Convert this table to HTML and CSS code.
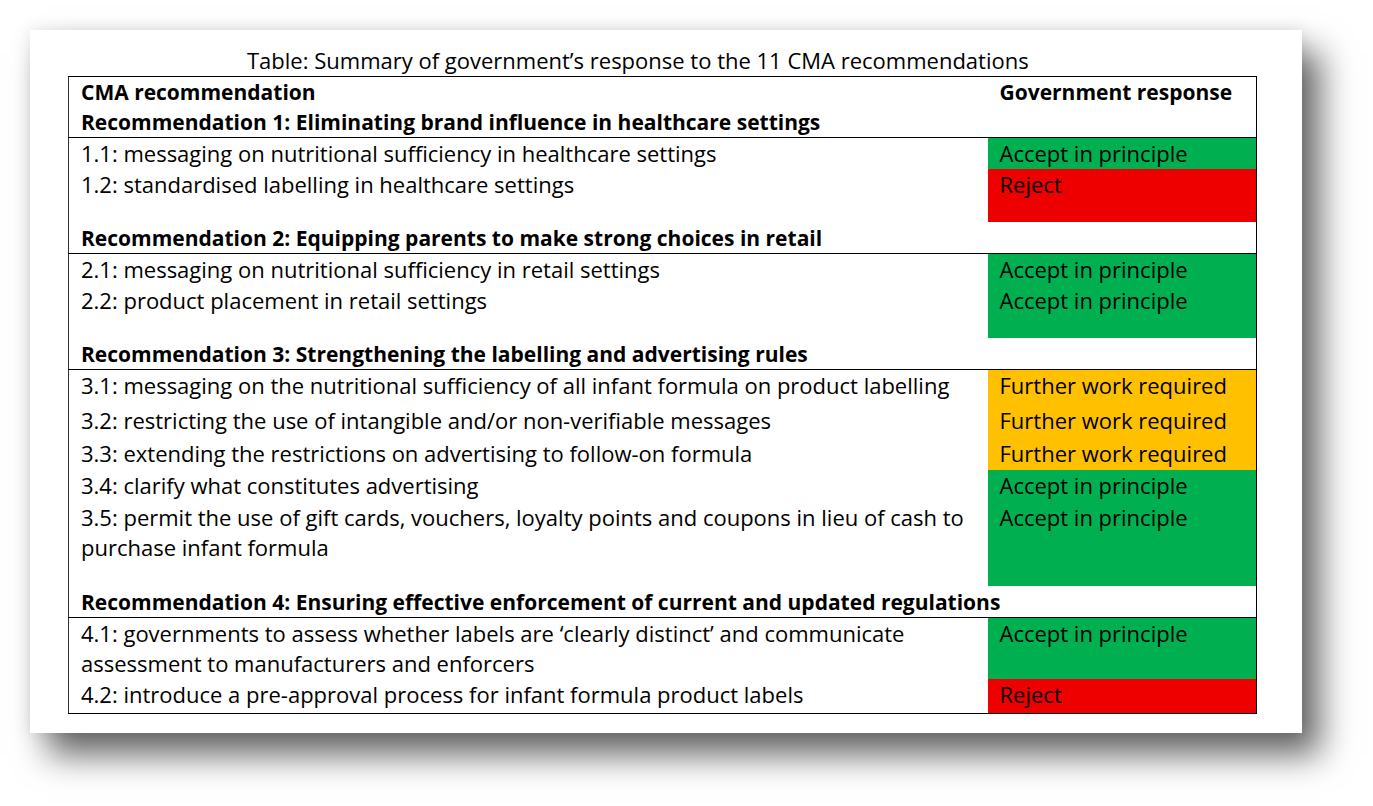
FILE: index.html
```html
<!DOCTYPE html>
<html lang="en">
<head>
<meta charset="utf-8">
<title>Summary of government's response</title>
<link rel="stylesheet" href="styles.css">
</head>
<body>
<div class="page">
  <div class="card">
    <div class="title">Table: Summary of government’s response to the 11 CMA recommendations</div>
    <table class="summary">
      <colgroup><col class="col-rec"><col class="col-resp"></colgroup>
      <thead>
        <tr class="head"><th>CMA recommendation</th><th>Government response</th></tr>
      </thead>
      <tbody>
        <tr class="group first"><th colspan="2">Recommendation 1: Eliminating brand influence in healthcare settings</th></tr>
        <tr><td>1.1: messaging on nutritional sufficiency in healthcare settings</td><td class="green">Accept in principle</td></tr>
        <tr class="last"><td>1.2: standardised labelling in healthcare settings</td><td class="red">Reject</td></tr>

        <tr class="group"><th colspan="2">Recommendation 2: Equipping parents to make strong choices in retail</th></tr>
        <tr><td>2.1: messaging on nutritional sufficiency in retail settings</td><td class="green">Accept in principle</td></tr>
        <tr class="last"><td>2.2: product placement in retail settings</td><td class="green">Accept in principle</td></tr>

        <tr class="group"><th colspan="2">Recommendation 3: Strengthening the labelling and advertising rules</th></tr>
        <tr class="pb5"><td>3.1: messaging on the nutritional sufficiency of all infant formula on product labelling</td><td class="amber">Further work required</td></tr>
        <tr class="pb3"><td>3.2: restricting the use of intangible and/or non-verifiable messages</td><td class="amber">Further work required</td></tr>
        <tr class="pb2"><td>3.3: extending the restrictions on advertising to follow-on formula</td><td class="amber">Further work required</td></tr>
        <tr class="pb2"><td>3.4: clarify what constitutes advertising</td><td class="green">Accept in principle</td></tr>
        <tr class="last tall"><td>3.5: permit the use of gift cards, vouchers, loyalty points and coupons in lieu of cash to purchase infant formula</td><td class="green">Accept in principle</td></tr>

        <tr class="group"><th colspan="2">Recommendation 4: Ensuring effective enforcement of current and updated regulations</th></tr>
        <tr><td>4.1: governments to assess whether labels are ‘clearly distinct’ and communicate assessment to manufacturers and enforcers</td><td class="green">Accept in principle</td></tr>
        <tr class="pb4"><td>4.2: introduce a pre-approval process for infant formula product labels</td><td class="red">Reject</td></tr>
      </tbody>
    </table>
  </div>
</div>
</body>
</html>
```

FILE: styles.css
```css
html, body {
  margin: 0;
  padding: 0;
  background: #ffffff;
}

body {
  font-family: "Open Sans", "Liberation Sans", sans-serif;
  color: #000;
}

.page {
  padding: 30px 71px 73px 30px;
  width: 1272px;
}

.card {
  width: 1272px;
  height: 703px;
  box-sizing: border-box;
  background: #fff;
  padding: 15px 0 0 38px;
  box-shadow: 18px 22px 32px rgba(0, 0, 0, 0.6), 0 0 16px rgba(0, 0, 0, 0.1);
}

.title {
  font-size: 22px;
  line-height: 30px;
  height: 31px;
  padding-left: 179px;
  white-space: nowrap;
}

.summary {
  border-collapse: collapse;
  table-layout: fixed;
  width: 1189px;
  border: 1px solid #000;
  border-left-color: #333;
  font-size: 22px;
}

.col-rec { width: 919px; }
.col-resp { width: 269px; }

.summary th,
.summary td {
  text-align: left;
  vertical-align: top;
  line-height: 30px;
}

.summary td {
  padding: 0 13px 1px 12px;
}

.summary th {
  font-weight: 700;
  font-size: 21px;
  padding: 1px 13px 0 12px;
}

.head th { padding-top: 0; }

.group th {
  border-bottom: 1px solid #000;
}

.group.first th { padding-top: 0; }

.last td { padding-bottom: 23px; }
.last.tall td { padding-bottom: 24px; }
.pb5 td { padding-bottom: 5px; }
.pb4 td { padding-bottom: 4px; }
.pb3 td { padding-bottom: 3px; }
.pb2 td { padding-bottom: 2px; }

.green { background: #00b050; }
.red { background: #ee0000; }
.amber { background: #ffc000; }
```
